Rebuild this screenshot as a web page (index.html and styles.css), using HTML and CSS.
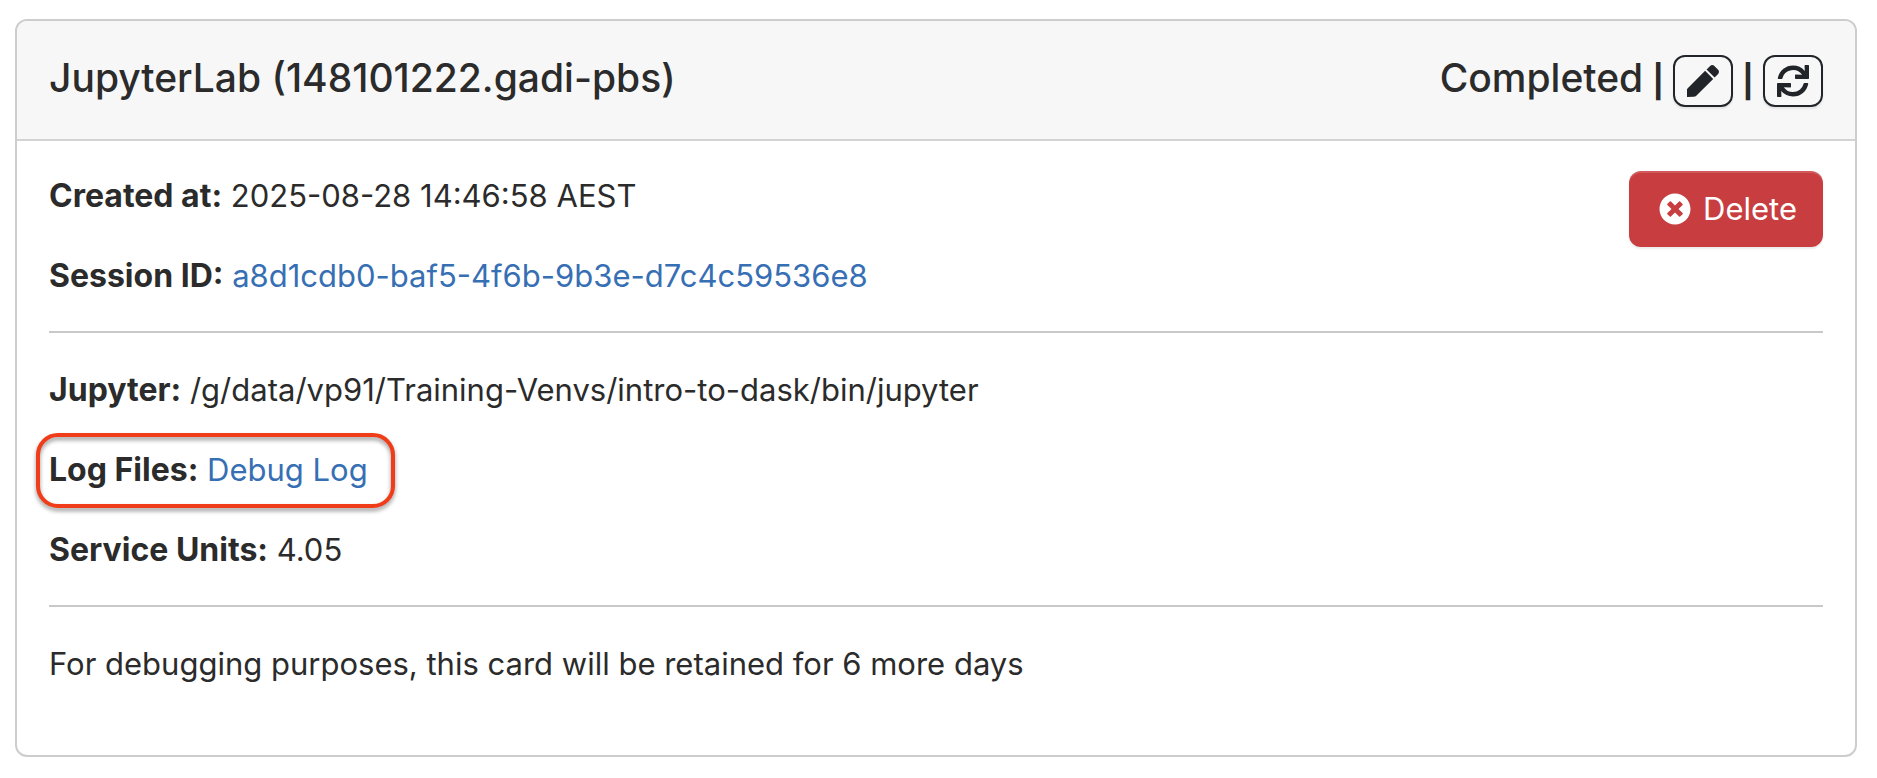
FILE: index.html
```html
<!DOCTYPE html>
<html lang="en">
<head>
<meta charset="utf-8">
<title>Interactive Sessions</title>
<link rel="stylesheet" href="styles.css">
</head>
<body>
<main class="card">
  <header class="card-header">
    <h1 class="title">JupyterLab (148101222.gadi-pbs)</h1>
    <div class="status">
      <span>Completed</span>
      <span class="divider">|</span>
      <button class="icon-btn" type="button" aria-label="Edit">
        <svg class="icon" viewBox="0 0 512 512" aria-hidden="true"><path d="M290 93L419 222 140 500 108 506 0 512 0 386 12 372zM497.94 74.18l-60.11-60.11c-18.75-18.75-49.16-18.75-67.91 0l-56.55 56.55 128.02 128.02 56.55-56.55c18.75-18.76 18.75-49.16 0-67.91z"/></svg>
      </button>
      <span class="divider">|</span>
      <button class="icon-btn" type="button" aria-label="Refresh">
        <svg class="icon" viewBox="0 0 512 512" aria-hidden="true"><path d="M440.65 12.57l4 82.77A247.16 247.16 0 0 0 255.83 8C134.73 8 33.91 94.92 12.29 209.82A12 12 0 0 0 24.09 224h49.05a12 12 0 0 0 11.67-9.26 175.91 175.91 0 0 1 317-56.94l-101.46-4.86a12 12 0 0 0-12.57 12v47.41a12 12 0 0 0 12 12H500a12 12 0 0 0 12-12V12a12 12 0 0 0-12-12h-47.37a12 12 0 0 0-11.98 12.57zM255.83 432a175.61 175.61 0 0 1-146-77.8l101.8 4.87a12 12 0 0 0 12.57-12v-47.4a12 12 0 0 0-12-12H12a12 12 0 0 0-12 12V500a12 12 0 0 0 12 12h47.35a12 12 0 0 0 12-12.6l-4.15-82.57A247.17 247.17 0 0 0 255.83 504c121.11 0 221.93-86.92 243.55-201.82a12 12 0 0 0-11.8-14.18h-49.05a12 12 0 0 0-11.67 9.26A175.86 175.86 0 0 1 255.83 432z"/></svg>
      </button>
    </div>
  </header>
  <div class="card-body">
    <div class="overview">
      <div class="rows">
        <p><strong>Created at:</strong> 2025-08-28 14:46:58 AEST</p>
        <p><strong>Session ID:</strong> <a href="#session">a8d1cdb0-baf5-4f6b-9b3e-d7c4c59536e8</a></p>
      </div>
      <button class="delete-btn" type="button">
        <svg class="icon" viewBox="0 0 512 512" aria-hidden="true"><path d="M256 8C119 8 8 119 8 256s111 248 248 248 248-111 248-248S393 8 256 8zm121.6 313.1c4.7 4.7 4.7 12.3 0 17L338 377.6c-4.7 4.7-12.3 4.7-17 0L256 312l-65.1 65.6c-4.7 4.7-12.3 4.7-17 0L134.4 338c-4.7-4.7-4.7-12.3 0-17l65.6-65-65.6-65.1c-4.7-4.7-4.7-12.3 0-17l39.6-39.6c4.7-4.7 12.3-4.7 17 0l65 65.7 65.1-65.6c4.7-4.7 12.3-4.7 17 0l39.6 39.6c4.7 4.7 4.7 12.3 0 17L312 256l65.6 65.1z"/></svg>
        <span>Delete</span>
      </button>
    </div>
    <hr>
    <div class="rows">
      <p><strong>Jupyter:</strong> /g/data/vp91/Training-Venvs/intro-to-dask/bin/jupyter</p>
      <p><span class="highlight"><strong>Log Files:</strong> <a href="#log">Debug Log</a></span></p>
      <p><strong>Service Units:</strong> 4.05</p>
    </div>
    <hr>
    <p>For debugging purposes, this card will be retained for 6 more days</p>
  </div>
</main>
</body>
</html>
```
FILE: styles.css
```css
* {
  box-sizing: border-box;
}

body {
  margin: 0;
  padding: 19px 20px 20px 15px;
  background: #fff;
  color: #2b2b2b;
  font-family: Inter, "Liberation Sans", sans-serif;
  font-size: 31px;
  line-height: 50px;
}

p, h1 {
  margin: 0;
}

strong {
  font-size: 32px;
}

a {
  color: #376fb4;
  text-decoration: none;
}

.card {
  border: 2px solid #cdcdcd;
  border-radius: 12px;
  overflow: hidden;
}

.card-header {
  display: flex;
  justify-content: space-between;
  align-items: flex-start;
  padding: 32px;
  border-bottom: 2px solid #d3d3d3;
  background: #f7f7f7;
  font-size: 39px;
  font-weight: 500;
}

.title {
  font-size: 39px;
  font-weight: 500;
}

.status {
  display: flex;
  gap: 9px;
}

.divider {
  padding-top: 4px;
  font-size: 32px;
  font-weight: 700;
}

.icon-btn {
  display: flex;
  align-items: center;
  justify-content: center;
  width: 60px;
  height: 52px;
  margin-top: 2px;
  padding: 0;
  border: 2px solid #212529;
  border-radius: 12px;
  background: transparent;
  color: #212529;
  box-shadow: 0 2px 2px rgba(0, 0, 0, 0.08);
}

.icon {
  width: 32px;
  height: 32px;
  fill: currentColor;
}

.card-body {
  padding: 30px 32px 66px;
}

.overview {
  display: flex;
  justify-content: space-between;
  align-items: flex-start;
}

.rows {
  display: flex;
  flex-direction: column;
  gap: 30px;
}

.delete-btn {
  display: flex;
  align-items: center;
  gap: 12px;
  padding: 13px 26px 13px 30px;
  border: 0;
  border-radius: 12px;
  background: #c83e40;
  color: #fff;
  font: inherit;
  box-shadow: inset 0 2px 0 rgba(255, 255, 255, 0.15), 0 2px 2px rgba(0, 0, 0, 0.08);
}

hr {
  height: 2px;
  margin: 30px 0 32px;
  border: 0;
  background: #c9c9c9;
}

.highlight {
  position: relative;
}

.highlight::after {
  content: "";
  position: absolute;
  inset: -18px -27px -20px -13px;
  border: 4px solid #f03c18;
  border-radius: 22px;
  filter: drop-shadow(0 3px 2px rgba(0, 0, 0, 0.4));
  pointer-events: none;
}
```
